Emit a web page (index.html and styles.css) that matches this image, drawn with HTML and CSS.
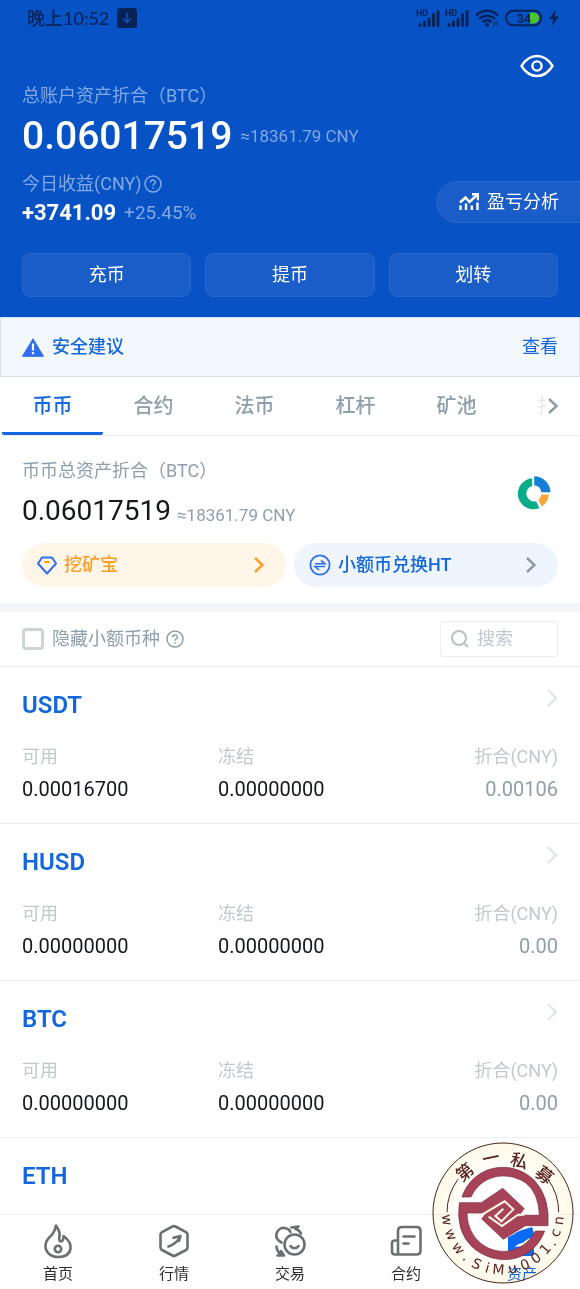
FILE: index.html
```html
<!DOCTYPE html>
<html lang="zh-CN">
<head>
<meta charset="utf-8">
<meta name="viewport" content="width=device-width, initial-scale=1">
<title>资产</title>
<link rel="stylesheet" href="styles.css">
</head>
<body>
<div class="app">
  <header class="hero">
    <div class="status">
      <span class="status-time">晚上10:52</span>
      <svg class="status-dl" viewBox="0 0 20 20" width="20" height="20"><rect width="20" height="20" rx="3" fill="#062358"/><path d="M10 5v9M6 10.500l4 4 4-4" fill="none" stroke="#1a51b0" stroke-width="1.500"/></svg>
      <span class="status-space"></span>
      <span class="signal"><span class="hd">HD</span><svg viewBox="0 0 23 17" width="23" height="17"><path d="M3 14.500v1M7.500 12v3.500M12 9v6.500M16.500 4.500v11M21 1.500v14" stroke="#062358" stroke-width="3" stroke-linecap="round"/></svg></span>
      <span class="signal"><span class="hd">HD</span><svg viewBox="0 0 23 17" width="23" height="17"><path d="M3 14.500v1M7.500 12v3.500M12 9v6.500M16.500 4.500v11M21 1.500v14" stroke="#062358" stroke-width="3" stroke-linecap="round"/></svg></span>
      <svg class="wifi" viewBox="0 0 24 18" width="24" height="18"><g fill="none" stroke="#062358" stroke-width="2.400"><path d="M1 6.500C7.500.2 16.500.2 23 6.500"/><path d="M4 10c4.500-4.400 11.500-4.400 16 0"/><path d="M7.500 13.200c2.600-2.600 6.400-2.600 9 0"/></g><circle cx="12" cy="15.500" r="2" fill="#062358"/><path d="M19.500 13v4M22 12.500v4" stroke="#062358"/></svg>
      <svg class="battery" viewBox="0 0 38 18" width="38" height="18"><rect x="1.200" y="1.700" width="35" height="14.600" rx="7" fill="none" stroke="#062358" stroke-width="2"/><path d="M25 3.500h3.500a5.500 5.500 0 0 1 0 11H25z" fill="#4cc42c"/><text x="12" y="14" class="battery-text">34</text></svg>
      <svg viewBox="0 0 10 16" width="10" height="16"><path d="M6.500 0 0 9h4L3 16l7-9.500H5.800z" fill="#062358"/></svg>
    </div>

    <div class="eye-row">
      <button class="icon-btn" aria-label="隐藏资产">
        <svg viewBox="0 0 34 24" width="34" height="24" fill="none" stroke="#fff" stroke-width="2.400"><path d="M1.500 12C5.500 5.500 10.500 2 17 2s11.500 3.500 15.500 10C28.500 18.500 23.500 22 17 22S5.500 18.500 1.500 12z" stroke-linejoin="round"/><circle cx="17" cy="12" r="4.600"/></svg>
      </button>
    </div>

    <p class="label light">总账户资产折合（BTC）</p>
    <p class="total"><strong class="total-num">0.06017519</strong><span class="approx light">≈18361.79 CNY</span></p>

    <div class="profit">
      <div>
        <p class="label light profit-label">今日收益(CNY)
          <svg viewBox="0 0 18 18" width="18" height="18" fill="none" stroke="currentColor" stroke-width="1.500"><circle cx="9" cy="9" r="8"/><path d="M6.600 7.300c0-3 4.800-3 4.800-.3 0 1.700-2.400 1.800-2.400 3.700M9 12.200v1.500"/></svg>
        </p>
        <p class="profit-value"><strong>+3741.09</strong><span class="light">+25.45%</span></p>
      </div>
      <button class="analysis">
        <svg viewBox="0 0 20 18" width="20" height="18" fill="none" stroke="#fff" stroke-width="2.400"><path d="M1 9.500 6.500 4.500l4 4.500L18 2"/><path d="M13 1.200h6v6"/><path d="M1.500 12.500V17M7 10.500V17M12.800 12.500V17M18.500 9.500V17" /></svg>
        盈亏分析
      </button>
    </div>

    <div class="actions">
      <button>充币</button><button>提币</button><button>划转</button>
    </div>
  </header>

  <section class="alert">
    <svg viewBox="0 0 22 19" width="22" height="19"><path d="M11 .8 21.500 18.300H.5z" fill="#2f6fec" stroke="#2f6fec" stroke-linejoin="round"/><path d="M11 5.500v7M11 14v2.200" stroke="#fff" stroke-width="2.200"/></svg>
    <strong>安全建议</strong>
    <a href="#safety">查看</a>
  </section>

  <nav class="tabs">
    <div class="tab-list">
      <a class="tab active" href="#spot">币币</a>
      <a class="tab" href="#contract">合约</a>
      <a class="tab" href="#otc">法币</a>
      <a class="tab" href="#margin">杠杆</a>
      <a class="tab" href="#pool">矿池</a>
    </div>
    <button class="tabs-more" aria-label="更多">
      <span class="peek">扌</span>
      <svg viewBox="0 0 10 18" width="10" height="18" fill="none" stroke="#8b9aa6" stroke-width="2.400"><path d="M1 2l7.500 7L1 16"/></svg>
    </button>
  </nav>

  <main class="content">
    <section class="summary">
      <div class="summary-top">
        <div>
          <p class="label muted">币币总资产折合（BTC）</p>
          <p class="sub-total"><span class="sub-num">0.06017519</span><span class="approx muted">≈18361.79 CNY</span></p>
        </div>
        <button class="icon-btn" aria-label="资产分布">
          <svg viewBox="0 0 34 34" width="34" height="34" fill="none"><path d="M15.200 2.200A15.600 15.600 0 1 0 22.300 32.200l-3.100-7A7.600 7.600 0 1 1 15.200 10z" fill="#08ab8a"/><path d="M17.200.2A16.300 16.300 0 0 1 33.500 16.300H24.300A8 8 0 0 0 17.200 9.300z" fill="#147fd8"/><path d="M24.200 18.500H31.800A15.500 15.500 0 0 1 25 30.400l-3.800-6.300A8 8 0 0 0 24.200 18.500z" fill="#fba53a"/></svg>
        </button>
      </div>
      <div class="pills">
        <a class="pill orange" href="#mine">
          <svg viewBox="0 0 20 19" width="20" height="19" fill="none" stroke-width="2"><path d="M5 1.500h10l4 6L10 17.500 1 7.500z" stroke="#2f6fec" stroke-linejoin="round"/><path d="M7.500 6h5" stroke="#f90"/></svg>
          <span>挖矿宝</span>
          <svg class="pill-arrow" viewBox="0 0 10 16" width="10" height="16" fill="none" stroke="currentColor" stroke-width="2.400"><path d="M1 1l7.500 7L1 15"/></svg>
        </a>
        <a class="pill blue" href="#swap">
          <svg viewBox="0 0 22 22" width="22" height="22" fill="none" stroke="#2f6fec" stroke-width="1.800"><circle cx="11" cy="11" r="9.600"/><path d="M6 9.800h10l-4-3.500M16 12.500H6l4 3.500" stroke-width="1.600"/></svg>
          <span>小额币兑换HT</span>
          <svg class="pill-arrow grey" viewBox="0 0 10 16" width="10" height="16" fill="none" stroke="currentColor" stroke-width="2.400"><path d="M1 1l7.500 7L1 15"/></svg>
        </a>
      </div>
    </section>

    <section class="filter">
      <label class="hide-small"><input type="checkbox">隐藏小额币种</label>
      <svg class="muted" viewBox="0 0 18 18" width="18" height="18" fill="none" stroke="currentColor" stroke-width="1.500"><circle cx="9" cy="9" r="8"/><path d="M6.600 7.300c0-3 4.800-3 4.800-.3 0 1.700-2.400 1.800-2.400 3.700M9 12.200v1.500"/></svg>
      <label class="search">
        <svg viewBox="0 0 18 18" width="18" height="18" fill="none" stroke="#b7c1c9" stroke-width="2"><circle cx="8" cy="8" r="7"/><path d="M13 13l4 4"/></svg>
        <input type="text" placeholder="搜索" aria-label="搜索">
      </label>
    </section>

    <ul class="coins">
      <li class="coin">
        <div class="coin-head"><h2>USDT</h2><svg viewBox="0 0 12 18" width="12" height="18" fill="none" stroke="#dfe4e9" stroke-width="2.200"><path d="M2 1l8 8-8 8"/></svg></div>
        <dl><div><dt>可用</dt><dd>0.00016700</dd></div><div><dt>冻结</dt><dd>0.00000000</dd></div><div class="worth"><dt>折合(CNY)</dt><dd>0.00106</dd></div></dl>
      </li>
      <li class="coin">
        <div class="coin-head"><h2>HUSD</h2><svg viewBox="0 0 12 18" width="12" height="18" fill="none" stroke="#dfe4e9" stroke-width="2.200"><path d="M2 1l8 8-8 8"/></svg></div>
        <dl><div><dt>可用</dt><dd>0.00000000</dd></div><div><dt>冻结</dt><dd>0.00000000</dd></div><div class="worth"><dt>折合(CNY)</dt><dd>0.00</dd></div></dl>
      </li>
      <li class="coin">
        <div class="coin-head"><h2>BTC</h2><svg viewBox="0 0 12 18" width="12" height="18" fill="none" stroke="#dfe4e9" stroke-width="2.200"><path d="M2 1l8 8-8 8"/></svg></div>
        <dl><div><dt>可用</dt><dd>0.00000000</dd></div><div><dt>冻结</dt><dd>0.00000000</dd></div><div class="worth"><dt>折合(CNY)</dt><dd>0.00</dd></div></dl>
      </li>
      <li class="coin">
        <div class="coin-head"><h2>ETH</h2></div>
      </li>
    </ul>
  </main>

  <nav class="bottom">
    <a href="#home">
      <svg viewBox="0 0 32 36" width="32" height="36" fill="none" stroke="#6b6e72" stroke-width="2.600" stroke-linejoin="round" stroke-linecap="round"><path d="M14 2.500c2 4 4.500 5.500 3.500 11-.4 2.400-.5 5 1.200 5 2 0 3-2.500 2.800-5.500 6 4.500 7.500 9 7 12.500-.8 5.500-5.500 8.500-12.500 8.500S3.500 29.500 3.500 23c0-7 4-8 7-12 2-2.500 2.800-5 3.500-8.500z"/><circle cx="16" cy="26" r="3.200"/></svg>
      首页</a>
    <a href="#market">
      <svg viewBox="0 0 32 36" width="32" height="36" fill="none" stroke="#6b6e72" stroke-width="2.600" stroke-linejoin="round" stroke-linecap="round"><path d="M14.500 3.500q1.500-.8 3 0l10.500 5.600q1.500.8 1.500 2.500v13q0 1.600-1.500 2.400L17.500 32.500q-1.500.8-3 0L4 27q-1.500-.8-1.500-2.400v-13Q2.500 9.900 4 9.100z"/><path d="M10.500 23.500c4.500-1.500 8.500-4.500 11.500-9M15.500 14.800l7-1.800-1.500 5"/></svg>
      行情</a>
    <a href="#trade">
      <svg viewBox="0 0 32 36" width="32" height="36" fill="none" stroke="#6b6e72" stroke-width="2.600" stroke-linejoin="round" stroke-linecap="round"><circle cx="20.500" cy="21.500" r="10"/><path d="M16.500 23c2 3 6 3 8 0M7.500 19.500C-2.500 14 4 4 10.500 5c3 .3 5 1.800 6 4M17.500 4.500l7-1-3 2.500c3 .8 4.500 2 5.500 4.500M2.500 23.500c.3 4 1.500 5.500 3.500 7.500M3.500 32.500h6.500L7 28"/></svg>
      交易</a>
    <a href="#futures">
      <svg viewBox="0 0 32 36" width="32" height="36" fill="none" stroke="#6b6e72" stroke-width="2.600" stroke-linejoin="round" stroke-linecap="round"><path d="M8 31.500V8q0-4 4-4h14.500q4 0 4 4v19.500q0 4-4 4H5q-3 0-3-3V20q0-2.500 3-2.500h3M13.500 13.500h11M13.500 20.500h5"/></svg>
      合约</a>
    <a class="current" href="#assets">
      <svg viewBox="0 0 32 36" width="32" height="36"><path d="M2 14c4-1 8-5 14-7l10-3 2 6v20q0 3-3 3H5q-3 0-3-3z" fill="#0b6af5"/><path d="M29 15c-8-1-9 4-13 5s-6 2-7 4c4-1 6 0 10-1s5 3 10 2z" fill="#fff"/></svg>
      资产</a>
  </nav>

  <div class="seal-disc"></div>
  <svg class="seal" viewBox="38 38 426 426" role="img" aria-label="第一私募 www.SiMu001.cn">
    <circle cx="251" cy="251" r="210" fill="none" stroke="#4a2620" stroke-width="3"/>
    <path d="M83 249A168 168 0 0 1 116 150M386 150A168 168 0 0 1 418 249" fill="none" stroke="#4a2620" stroke-width="3"/>
    <g fill="#a64358" stroke="#7c2c3c" stroke-width="2">
      <path d="M128 203C158 112 272 82 346 154Q392 204 386 289H318L252 330 187 268 218 246 254 284 310 258H360Q358 190 318 160C262 122 184 138 155 203z"/>
      <path d="M120 220H186L250 177 315 238 282 262 248 222 192 251H143Q144 308 184 342C240 386 316 368 348 305H376C342 398 234 416 162 356Q108 308 120 220z"/>
      <path d="M250 177 315 238 252 330 187 268z" stroke="none"/>
    </g>
    <path d="M188 256 256 216 282 240 246 276 228 260 252 238M315 256H296L248 290 208 262" fill="none" stroke="#fff9e6" stroke-width="6"/>
    <g class="seal-cn">
      <text transform="translate(137 129) rotate(-39)" y="18">第</text>
      <text transform="translate(215 87) rotate(-12)" y="18">一</text>
      <text transform="translate(299 95) rotate(14)" y="18">私</text>
      <text transform="translate(375 138) rotate(39)" y="18">募</text>
    </g>
    <g class="seal-en">
      <text transform="translate(79 272) rotate(83)" y="10">w</text>
      <text transform="translate(91 317) rotate(68)" y="10">w</text>
      <text transform="translate(114 359) rotate(53)" y="10">w</text>
      <text transform="translate(139 385) rotate(41)" y="10">.</text>
      <text transform="translate(172 404) rotate(27)" y="14">S</text>
      <text transform="translate(204 416) rotate(16)" y="14">i</text>
      <text transform="translate(237 421) rotate(5)" y="14">M</text>
      <text transform="translate(280 421) rotate(-10)" y="10">u</text>
      <text transform="translate(317 406) rotate(-23)" y="14">0</text>
      <text transform="translate(350 386) rotate(-37)" y="14">0</text>
      <text transform="translate(378 359) rotate(-50)" y="14">1</text>
      <text transform="translate(400 342) rotate(-60)" y="10">.</text>
      <text transform="translate(412 312) rotate(-70)" y="10">c</text>
      <text transform="translate(422 274) rotate(-83)" y="10">n</text>
    </g>
  </svg>
</div>
</body>
</html>
```

FILE: styles.css
```css
* { box-sizing: border-box; }
body, p, h2, ul, dl, dd { margin: 0; padding: 0; }
body {
  font-family: Roboto, "Noto Sans CJK SC", sans-serif;
  font-size: 18px;
  line-height: 24px;
  color: #14171c;
  background: #fff;
}
button, input { font: inherit; color: inherit; }
button { cursor: pointer; }
a { text-decoration: none; color: inherit; }
svg { display: block; flex: none; }
.app {
  position: relative;
  display: flex;
  flex-direction: column;
  height: 100vh;
  overflow: hidden;
}

/* Header */
.hero { flex: none; background: #0752c5; color: #fff; padding: 0 22px 20px; }
.status { display: flex; align-items: center; height: 36px; padding-left: 5px; gap: 6px; margin-right: -1px; color: #062358; }
.status-time { font-family: Lato, "Noto Sans CJK SC", sans-serif; font-size: 18px; font-weight: 500; }
.status-dl { margin-left: 2px; }
.status-space { flex: 1; }
.signal { position: relative; }
.hd { position: absolute; left: -1px; top: -2px; font-size: 9px; line-height: 10px; font-weight: 700; }
.battery-text { font: 700 12px Roboto, sans-serif; fill: #062358; }
.eye-row { display: flex; justify-content: flex-end; padding: 18px 4px 6px 0; }
.icon-btn { border: 0; padding: 0; background: none; }
.label { font-size: 18px; }
.light { color: #83a9e5; }
.muted { color: #8d9eac; }
.total { display: flex; align-items: center; gap: 8px; height: 56px; }
.total-num { font-size: 39px; font-weight: 500; }
.approx { font-size: 17px; }
.profit { display: flex; justify-content: space-between; align-items: center; margin-right: -22px; }
.profit-label { display: flex; align-items: center; gap: 2px; margin-top: 8px; }
.profit-value { display: flex; align-items: center; gap: 8px; height: 34px; font-size: 19px; }
.profit-value strong { font-size: 22px; }
.analysis {
  display: flex; align-items: center; gap: 8px;
  height: 42px; padding: 0 21px 0 22px; margin-top: 10px;
  border: 1px solid #2a68cc; border-right: 0; border-radius: 21px 0 0 21px;
  background: #1a5dc8; color: #fff;
}
.actions { display: grid; grid-template-columns: repeat(3, 1fr); gap: 14px; margin-top: 23px; }
.actions button { height: 44px; border: 1px solid #2868cc; border-radius: 8px; background: #1a5dc8; color: #fff; }

/* Security notice */
.alert {
  flex: none; display: flex; align-items: center; gap: 8px;
  height: 60px; padding: 0 21px;
  background: #f3f7fe; border: 1px solid #d7e1f0; color: #1267dc;
}
.alert strong { font-weight: 500; }
.alert a { margin-left: auto; }

/* Account tabs */
.tabs { flex: none; position: relative; border-bottom: 1px solid #eceef1; }
.tab-list { display: flex; overflow: hidden; padding-left: 2px; }
.tab {
  flex: 0 0 101px; height: 58px; line-height: 58px;
  text-align: center; font-size: 20px; font-weight: 500; color: #8d9eac;
}
.tab.active { color: #1267dc; border-bottom: 3px solid #1267dc; border-radius: 2px; }
.tabs-more {
  position: absolute; right: 0; top: 0; height: 58px; padding: 0 22px 0 0;
  display: flex; align-items: center; border: 0; background: #fff;
}
.peek { width: 12px; font-size: 20px; color: #e6e9ec; }

/* Account summary */
.content { flex: 1; min-height: 0; overflow: hidden; }
.summary { padding: 23px 22px 16px; border-bottom: 9px solid #f4f5fa; }
.summary-top { display: flex; justify-content: space-between; padding-right: 7px; }
.summary-top .icon-btn { align-self: center; margin-bottom: 16px; }
.sub-total { display: flex; align-items: center; gap: 6px; height: 60px; padding-bottom: 4px; }
.sub-num { font-size: 28px; }
.sub-total .approx { padding-top: 8px; }
.pills { display: grid; grid-template-columns: 1fr 1fr; gap: 8px; }
.pill { display: flex; align-items: center; gap: 7px; height: 44px; padding: 0 22px 0 15px; border-radius: 22px; font-weight: 500; }
.pill-arrow { margin-left: auto; }
.orange { background: #fff6e9; color: #fb9e27; }
.blue { background: #eef5fe; color: #1267dc; }
.grey { color: #8b9aa6; }

/* Filter row */
.filter { display: flex; align-items: center; gap: 6px; height: 55px; padding: 0 22px; border-bottom: 1px solid #eceef1; }
.hide-small { display: flex; align-items: center; gap: 8px; color: #8d9eac; }
.hide-small input { appearance: none; width: 22px; height: 22px; margin: 0; border: 3px solid #ccd4db; border-radius: 4px; background: #fff; }
.search { display: flex; align-items: center; gap: 8px; width: 118px; height: 36px; margin-left: auto; padding: 0 10px; border: 1px solid #eceff2; border-radius: 3px; }
.search input { flex: 1; min-width: 0; padding: 0; border: 0; outline: 0; background: none; }
.search input::placeholder { color: #c1c9d0; opacity: 1; }

/* Coin list */
.coins { list-style: none; }
.coin { height: 157px; padding: 22px 22px 0; border-bottom: 1px solid #eceef1; }
.coin-head { display: flex; justify-content: space-between; height: 56px; }
.coin h2 { font-size: 24px; line-height: 32px; font-weight: 600; color: #1267dc; }
.coin dl { display: grid; grid-template-columns: 196px 1fr auto; }
.coin dt { color: #c1c9d0; line-height: 24px; }
.coin dd { font-size: 20px; line-height: 40px; }
.worth { text-align: right; }
.worth dd { color: #8d9eac; }

/* Bottom navigation */
.bottom { flex: none; display: grid; grid-template-columns: repeat(5, 1fr); height: 75px; padding-top: 8px; border-top: 1px solid #eceef1; background: #fff; }
.bottom a { display: flex; flex-direction: column; align-items: center; gap: 3px; font-size: 15px; line-height: 24px; color: #2a2c30; }
.bottom .current { color: #1267dc; }

/* Floating round seal */
.seal-disc, .seal { position: absolute; right: 6px; bottom: 5px; width: 142px; height: 142px; }
.seal-disc { border-radius: 50%; background: radial-gradient(#fff 40%, #fffbec 62%); mix-blend-mode: multiply; }
.seal-cn text { font: 500 52px "Noto Sans CJK SC", sans-serif; fill: #5a2320; text-anchor: middle; }
.seal-en text { font: 42px "DejaVu Sans", sans-serif; fill: #5a2320; text-anchor: middle; }
```
